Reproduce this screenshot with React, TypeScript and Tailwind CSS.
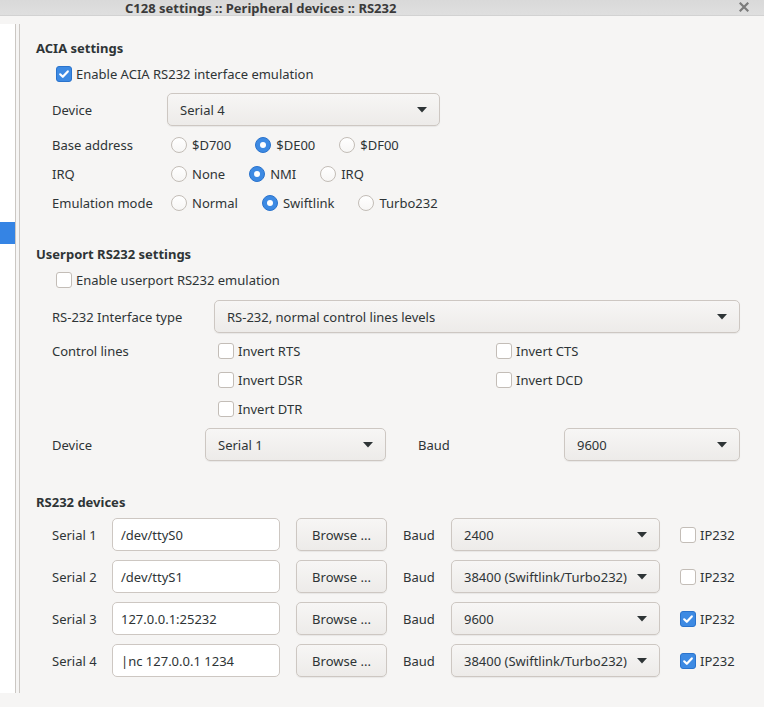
import React from "react";

function Check({ checked }: { checked?: boolean }) {
  if (checked) {
    return (
      <span className="w-[16px] h-[16px] shrink-0 rounded-[3px] bg-[#3d8ae3] border border-[#2a73cc] flex items-center justify-center">
        <svg width="12" height="12" viewBox="0 0 12 12">
          <path d="M2.2 6.3 L4.8 8.8 L9.8 3.4" fill="none" stroke="white" strokeWidth="2.2" strokeLinecap="round" strokeLinejoin="round" />
        </svg>
      </span>
    );
  }
  return <span className="w-[16px] h-[16px] shrink-0 rounded-[3px] bg-white border border-[#c3bdb7]" />;
}

function Radio({ checked }: { checked?: boolean }) {
  if (checked) {
    return (
      <span className="w-[16px] h-[16px] shrink-0 rounded-full bg-[#3d8ae3] border border-[#2a73cc] flex items-center justify-center">
        <span className="w-[6px] h-[6px] rounded-full bg-white" />
      </span>
    );
  }
  return <span className="w-[16px] h-[16px] shrink-0 rounded-full bg-gradient-to-b from-white to-[#f7f6f5] border border-[#c3bdb7]" />;
}

function Arrow() {
  return (
    <svg width="10" height="6" viewBox="0 0 10 6" className="shrink-0">
      <polygon points="0,0 10,0 5,5.5" fill="#2e3436" />
    </svg>
  );
}

function Combo({ text, className }: { text: string; className: string }) {
  return (
    <div
      className={
        "h-[33px] shrink-0 flex items-center justify-between gap-[2px] rounded-[5px] border border-[#cdc7c2] bg-gradient-to-b from-[#f7f6f5] to-[#edebe9] shadow-[0_1px_1px_rgba(0,0,0,0.06)] pl-[12px] pr-[12px] " +
        className
      }
    >
      <span className="whitespace-nowrap overflow-hidden">{text}</span>
      <Arrow />
    </div>
  );
}

function RadioOpt({ label, checked }: { label: string; checked?: boolean }) {
  return (
    <div className="flex items-center gap-[5px]">
      <Radio checked={checked} />
      <span>{label}</span>
    </div>
  );
}

function CheckOpt({ label, checked }: { label: string; checked?: boolean }) {
  return (
    <div className="flex items-center gap-[4px]">
      <Check checked={checked} />
      <span>{label}</span>
    </div>
  );
}

function RadioRow({ label, opts, sel }: { label: string; opts: string[]; sel: number }) {
  return (
    <div className="h-[29px] flex items-center pl-[16px]">
      <span className="w-[119px] shrink-0">{label}</span>
      <div className="flex items-center gap-[24px]">
        {opts.map((o, i) => (
          <RadioOpt key={o} label={o} checked={i === sel} />
        ))}
      </div>
    </div>
  );
}

function SerialRow({ n, path, baud, ip }: { n: number; path: string; baud: string; ip?: boolean }) {
  return (
    <div className="h-[33px] flex items-center pl-[16px]">
      <span className="w-[60px] shrink-0">Serial {n}</span>
      <div className="w-[168px] h-[33px] shrink-0 flex items-center rounded-[5px] border border-[#cdc7c2] bg-white pl-[8px] whitespace-nowrap">
        {path}
      </div>
      <div className="ml-[16px] w-[91px] h-[33px] shrink-0 flex items-center justify-center rounded-[5px] border border-[#cdc7c2] bg-gradient-to-b from-[#f7f6f5] to-[#edebe9] shadow-[0_1px_1px_rgba(0,0,0,0.06)]">
        Browse ...
      </div>
      <span className="ml-[16px] w-[48px] shrink-0">Baud</span>
      <Combo text={baud} className="w-[209px]" />
      <div className="ml-[20px]">
        <CheckOpt label="IP232" checked={ip} />
      </div>
    </div>
  );
}

export default function App() {
  return (
    <div className="w-[764px] h-[707px] overflow-hidden bg-[#f6f5f4] text-[#2e3436] text-[13px] font-['Noto_Sans','DejaVu_Sans',sans-serif] flex flex-col">
      {/* title bar */}
      <div className="h-[16px] shrink-0 bg-gradient-to-b from-[#d9d9d9] to-[#dfdfdf] border-b border-[#d2d2d2] flex items-center relative">
        <span className="pl-[125px] font-bold text-[13px] leading-[16px] text-[#3a3a3a] whitespace-nowrap">
          C128 settings :: Peripheral devices :: RS232
        </span>
        <svg width="10" height="10" viewBox="0 0 10 10" className="absolute right-[15px] top-[2px]">
          <path d="M1.5 1.5 L8.5 8.5 M8.5 1.5 L1.5 8.5" stroke="#7b7b7b" strokeWidth="2.2" strokeLinecap="square" />
        </svg>
      </div>

      {/* body */}
      <div className="mt-[8px] h-[669px] shrink-0 flex">
        {/* left tree panel */}
        <div className="w-[16px] shrink-0 bg-white border-r border-[#cbc7c3] flex flex-col">
          <div className="h-[198px]" />
          <div className="h-[22px] bg-[#3584e4]" />
        </div>
        <div className="w-[3px] shrink-0" />
        {/* content */}
        <div className="flex-1 border-l border-[#cbc7c3] flex flex-col pl-[16px] pt-[16px] leading-[16px]">
          {/* ACIA */}
          <div className="h-[16px] flex items-center font-bold">ACIA settings</div>
          <div className="mt-[8px] h-[20px] flex items-center pl-[20px]">
            <CheckOpt label="Enable ACIA RS232 interface emulation" checked />
          </div>
          <div className="mt-[9px] h-[33px] flex items-center pl-[16px]">
            <span className="w-[115px] shrink-0">Device</span>
            <Combo text="Serial 4" className="w-[273px]" />
          </div>
          <div className="mt-[4px]" />
          <RadioRow label="Base address" opts={["$D700", "$DE00", "$DF00"]} sel={1} />
          <RadioRow label="IRQ" opts={["None", "NMI", "IRQ"]} sel={1} />
          <RadioRow label="Emulation mode" opts={["Normal", "Swiftlink", "Turbo232"]} sel={1} />

          {/* Userport */}
          <div className="mt-[29px] h-[16px] flex items-center font-bold">Userport RS232 settings</div>
          <div className="mt-[8px] h-[20px] flex items-center pl-[20px]">
            <CheckOpt label="Enable userport RS232 emulation" />
          </div>
          <div className="mt-[10px] h-[33px] flex items-center pl-[16px]">
            <span className="w-[162px] shrink-0">RS-232 Interface type</span>
            <Combo text="RS-232, normal control lines levels" className="w-[526px]" />
          </div>
          <div className="mt-[3px] flex pl-[16px]">
            <span className="w-[166px] shrink-0 h-[29px] flex items-center">Control lines</span>
            <div className="grid grid-cols-[278px_200px] auto-rows-[29px] items-center">
              <CheckOpt label="Invert RTS" />
              <CheckOpt label="Invert CTS" />
              <CheckOpt label="Invert DSR" />
              <CheckOpt label="Invert DCD" />
              <CheckOpt label="Invert DTR" />
            </div>
          </div>
          <div className="mt-[5px] h-[33px] flex items-center pl-[16px]">
            <span className="w-[153px] shrink-0">Device</span>
            <Combo text="Serial 1" className="w-[181px]" />
            <span className="ml-[32px] w-[146px] shrink-0">Baud</span>
            <Combo text="9600" className="w-[176px]" />
          </div>

          {/* RS232 devices */}
          <div className="mt-[33px] h-[16px] flex items-center font-bold">RS232 devices</div>
          <div className="mt-[8px] flex flex-col gap-[9px]">
            <SerialRow n={1} path="/dev/ttyS0" baud="2400" />
            <SerialRow n={2} path="/dev/ttyS1" baud="38400 (Swiftlink/Turbo232)" />
            <SerialRow n={3} path="127.0.0.1:25232" baud="9600" ip />
            <SerialRow n={4} path="|nc 127.0.0.1 1234" baud="38400 (Swiftlink/Turbo232)" ip />
          </div>
        </div>
      </div>
    </div>
  );
}
